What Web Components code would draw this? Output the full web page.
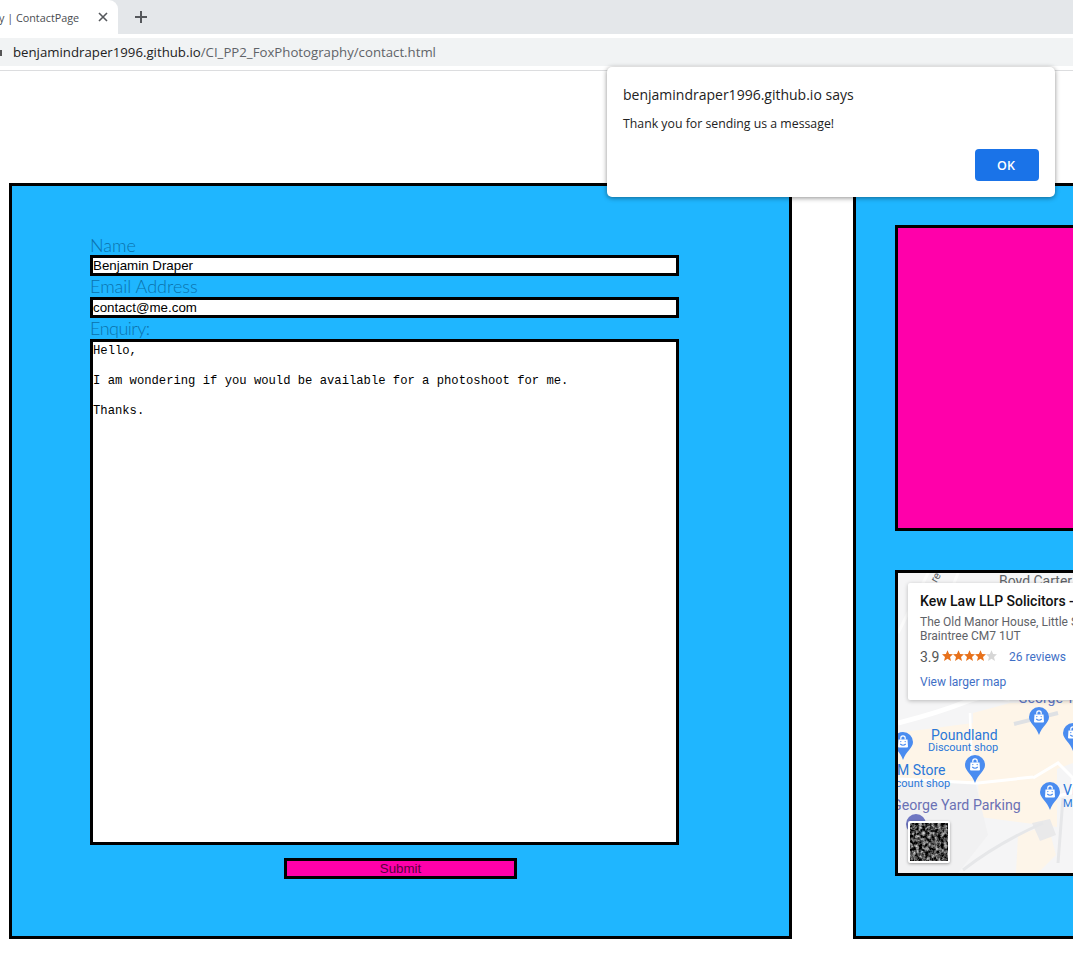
<!DOCTYPE html>
<html><head><meta charset="utf-8"><title>ContactPage</title>
<style>
html,body{margin:0;padding:0;background:#fff;height:965px;overflow:hidden}
body{display:flex;flex-direction:column;position:relative;font-family:"Liberation Sans",sans-serif}
</style></head><body>
<browser-chrome></browser-chrome>
<contact-stage>
  <contact-panel>
    <contact-form></contact-form>
  </contact-panel>
  <contact-panel variant="side">
    <pink-block></pink-block>
    <map-embed></map-embed>
  </contact-panel>
</contact-stage>
<alert-dialog origin="benjamindraper1996.github.io says" message="Thank you for sending us a message!"></alert-dialog>
<script>
function def(name,html,setup){
  customElements.define(name,class extends HTMLElement{
    constructor(){super();const r=this.attachShadow({mode:'open'});r.innerHTML=typeof html==='function'?html(this):html;}
    connectedCallback(){if(setup)setup(this,this.shadowRoot);}
  });
}
def('browser-chrome',`<style>
:host{display:block;height:71px;flex:none;font-family:"Open Sans","Noto Sans",sans-serif;background:#fff}
.strip{height:34px;background:#e4e7ea;display:flex;align-items:flex-start}
.tab{width:118px;height:34px;background:#fff;border-top-right-radius:9px;display:flex;align-items:center;box-sizing:border-box;color:#4a4d51;font-size:10.8px;white-space:nowrap;overflow:hidden;position:relative}
.tab span{margin-left:-1px}
.tab svg{position:absolute;left:98px;top:12px}
.plus{margin:10px 0 0 16px;display:block}
.bar{height:37px;box-sizing:border-box;border-bottom:1px solid #dcdddf;padding-top:4px}
.pill{height:28px;background:#f1f3f4;display:flex;align-items:center;font-size:13.22px;color:#222;white-space:nowrap;padding-left:13px;position:relative}
.pill i{font-style:normal;color:#5f6368}
.lock{position:absolute;left:0;top:12px;width:2px;height:6px;background:#555}
</style>
<div class="strip"><div class="tab"><span>y | ContactPage</span>
<svg width="10" height="10" viewBox="0 0 10 10"><path d="M1 1L9 9M9 1L1 9" stroke="#55585c" stroke-width="1.6" fill="none"/></svg></div>
<svg class="plus" width="14" height="14" viewBox="0 0 14 14"><path d="M7 1V13M1 7H13" stroke="#55585c" stroke-width="2" fill="none"/></svg></div>
<div class="bar"><div class="pill"><b class="lock"></b>benjamindraper1996.github.io<i>/CI_PP2_FoxPhotography/contact.html</i></div></div>`);

def('contact-stage',`<style>
:host{display:flex;gap:61px;flex:none;width:1073px;box-sizing:border-box;padding:112px 0 0 9px;overflow:hidden}
</style><slot></slot>`);

def('contact-panel',`<style>
:host{display:block;flex:none;width:783px;height:756px;box-sizing:border-box;border:3px solid #000;background:#1fb6ff;padding:50px 0 0 78px}
:host([variant=side]){display:flex;flex-direction:column;gap:39px;padding:39px 0 0 39px}
</style><slot></slot>`);

def('contact-form',`<style>
:host{display:flex;flex-direction:column;width:589px;font-family:"Liberation Sans",sans-serif}
.lab{font-family:Lato,"Open Sans",sans-serif;font-weight:300;font-size:18px;color:#0b72ad;height:21px;line-height:21px;white-space:nowrap}
.lab.first{height:19px;line-height:19px}
.lab.q{letter-spacing:-.5px}
.box{box-sizing:border-box;border:3px solid #000;background:#fff;color:#000;height:21px;font-size:13.33px;line-height:15px}
.area{height:506px;font-family:"Liberation Mono",monospace;font-size:12.2px;line-height:15px;white-space:pre-line;padding-top:2px}
.sub{box-sizing:border-box;margin:13px 0 0 194px;width:233px;height:21px;border:3px solid #000;background:#ff00aa;color:#5a003c;font-size:13.33px;line-height:15px;text-align:center}
</style>
<div class="lab first">Name</div>
<div class="box" role="textbox">Benjamin Draper</div>
<div class="lab">Email Address</div>
<div class="box" role="textbox">contact@me.com</div>
<div class="lab q">Enquiry:</div>
<div class="box area" role="textbox">Hello,

I am wondering if you would be available for a photoshoot for me.

Thanks.</div>
<div class="sub" role="button">Submit</div>`);

def('pink-block',`<style>
:host{display:block;flex:none;width:783px;height:306px;box-sizing:border-box;border:3px solid #000;background:#ff00aa}
</style>`);

def('map-pin',`<style>
:host{position:absolute;display:block;width:20px;height:28px}
svg{display:block}
</style><svg width="20" height="28" viewBox="0 0 20 28">
<path d="M10 0A10 10 0 0 1 20 10C20 16 13 19 10 28C7 19 0 16 0 10A10 10 0 0 1 10 0Z" fill="#4a8cf0"/>
<path d="M5.5 7.5H14.5L15 14.5Q15 15.5 14 15.5H6Q5 15.5 5 14.5Z" fill="#fff"/><path d="M7.8 7.5V6A2.2 2.2 0 0 1 12.2 6V7.5" fill="none" stroke="#fff" stroke-width="1.2"/>
<circle cx="7.8" cy="9.6" r=".7" fill="#4a8cf0"/><circle cx="12.2" cy="9.6" r=".7" fill="#4a8cf0"/><path d="M7.2 12Q10 14.4 12.8 12" fill="none" stroke="#4a8cf0" stroke-width="1.1"/>
</svg>`);

def('map-embed',`<style>
:host{display:block;flex:none;position:relative;width:783px;height:306px;box-sizing:border-box;border:3px solid #000;background:#f5f5f6;overflow:hidden;font-family:Roboto,sans-serif}
svg.base{position:absolute;left:0;top:0}
.t{position:absolute;white-space:nowrap;line-height:1}
.blue{color:#2b78d8;font-size:14px}
.blue2{color:#2b78d8;font-size:11px}
.park{color:#6b71b5;font-size:14.2px}
.road{color:#5f6368;font-size:14px}
.card{position:absolute;left:10px;top:10px;width:500px;height:117px;background:#fff;box-shadow:0 1px 4px rgba(0,0,0,.25);border-radius:2px}
.card .t{left:12px}
.name{top:11px;font-size:14px;font-weight:500;color:#111}
.addr{font-size:12px;color:#5f6368}
.rate{top:67px;font-size:14px;color:#555}
.stars{position:absolute;left:34px;top:67px;display:block}
.link{font-size:12px;color:#3f6fc6}
.sat{position:absolute;left:10px;top:248px;width:42px;height:42px;box-sizing:border-box;border:2px solid #fff;border-radius:2px;box-shadow:0 1px 3px rgba(0,0,0,.35);background:#3c3c3c;overflow:hidden}
.sat svg{display:block}
.dot{position:absolute;left:8px;top:241px;width:20px;height:20px;border-radius:50%;background:#6f77c2}
</style>
<svg class="base" width="200" height="300" viewBox="0 0 200 300">
<path d="M-1 160L75 150L75 140L112 130L200 127V170L180 168L175 190L159 196L159 254L82 244L80 210L-1 204Z" fill="#fef5e8"/>
<path d="M-1 206L78 212L90 262L60 300H-1Z" fill="#f1f1f2"/>
<path d="M120 262L150 252L158 282L140 300H118Z" fill="#fef5e8" opacity=".9"/>
<path d="M134 250L152 246L158 262L142 268Z" fill="#e9e9ea"/>
<path d="M0 150Q40 140 70 128Q90 120 112 126" fill="none" stroke="#fff" stroke-width="5"/>
<path d="M72 140L74 205" fill="none" stroke="#fff" stroke-width="2.5"/>
<path d="M0 206L80 210L135 204" fill="none" stroke="#fff" stroke-width="3"/>
<path d="M135 205L160 190L175 205L173 220L150 225" fill="none" stroke="#fff" stroke-width="3"/>
<path d="M165 225L160 290" fill="none" stroke="#e6e7e9" stroke-width="3"/>
<path d="M65 297Q100 270 145 250" fill="none" stroke="#e6e7e9" stroke-width="3"/>
<path d="M116 151L160 140" stroke="#dfe1e4" stroke-width="4" fill="none"/>
<path d="M0 60L30 0M20 100L60 0" stroke="#fbfbfb" stroke-width="3" fill="none"/>
</svg>
<div class="t road" style="left:101px;top:1px">Boyd Carter</div>
<div class="t" style="left:33px;top:-1px;font-size:11px;color:#5f6368;transform:rotate(-60deg)">re</div>
<div class="t blue" style="left:120px;top:118px;color:#5f78c6">George Yard</div>
<div class="card">
  <div class="t name">Kew Law LLP Solicitors - Braintree</div>
  <div class="t addr" style="top:33px">The Old Manor House, Little Square,</div>
  <div class="t addr" style="top:47px">Braintree CM7 1UT</div>
  <div class="t rate">3.9</div>
  <svg class="stars" width="56" height="12" viewBox="0 0 56 12">
    <defs><path id="s" d="M5.5 0.2L7.1 4L11 4.3L8 6.9L9 11L5.5 8.8L2 11L3 6.9L0 4.3L3.9 4Z"/></defs>
    <use href="#s" x="0" fill="#e7711b"/><use href="#s" x="11" fill="#e7711b"/><use href="#s" x="22" fill="#e7711b"/><use href="#s" x="33" fill="#e7711b"/><use href="#s" x="44" fill="#d6d6d6"/>
  </svg>
  <div class="t link" style="left:101px;top:68px">26 reviews</div>
  <div class="t link" style="top:93px">View larger map</div>
</div>
<map-pin style="left:131px;top:134px"></map-pin>
<map-pin style="left:-5px;top:159px"></map-pin>
<map-pin style="left:67px;top:182px"></map-pin>
<map-pin style="left:142px;top:209px"></map-pin>
<map-pin style="left:165px;top:150px"></map-pin>
<div class="t blue" style="left:33px;top:155px">Poundland</div>
<div class="t blue2" style="left:30px;top:169px">Discount shop</div>
<div class="t blue" style="left:-1px;top:190px">M Store</div>
<div class="t blue2" style="left:-18px;top:205px">Discount shop</div>
<div class="t park" style="left:-6px;top:225px">George Yard Parking</div>
<div class="t blue" style="left:165px;top:210px">Victoria</div>
<div class="t blue2" style="left:165px;top:225px">Market</div>
<div class="dot"></div>
<div class="sat"><svg width="38" height="38"><filter id="n" x="0" y="0" width="100%" height="100%" color-interpolation-filters="sRGB"><feTurbulence type="fractalNoise" baseFrequency=".32" numOctaves="3" seed="4"/><feColorMatrix values="1.6 0 0 0 -.5 1.6 0 0 0 -.5 1.6 0 0 0 -.5 0 0 0 0 1"/></filter><rect width="38" height="38" filter="url(#n)"/></svg></div>`);

def('alert-dialog',(e)=>`<style>
:host{position:absolute;left:607px;top:67px;width:448px;height:130px;box-sizing:border-box;background:#fff;border-radius:5px;box-shadow:0 1px 5px rgba(0,0,0,.45);font-family:"Open Sans","Noto Sans",sans-serif;padding:18px 16px 16px;display:flex;flex-direction:column}
.o{font-size:14px;line-height:20px;color:#222;white-space:nowrap}
.m{font-size:12.3px;line-height:18px;color:#222;margin-top:10px;white-space:nowrap}
.row{display:flex;justify-content:flex-end;margin-top:auto}
.ok{width:64px;height:32px;background:#1a73e8;color:#fff;border-radius:4px;font-size:12.5px;font-weight:600;display:flex;align-items:center;justify-content:center;padding-right:2px;box-sizing:border-box}
</style><div class="o">${e.getAttribute('origin')||'benjamindraper1996.github.io says'}</div><div class="m">${e.getAttribute('message')||'Thank you for sending us a message!'}</div><div class="row"><div class="ok" role="button">OK</div></div>`);
</script>
</body></html>
